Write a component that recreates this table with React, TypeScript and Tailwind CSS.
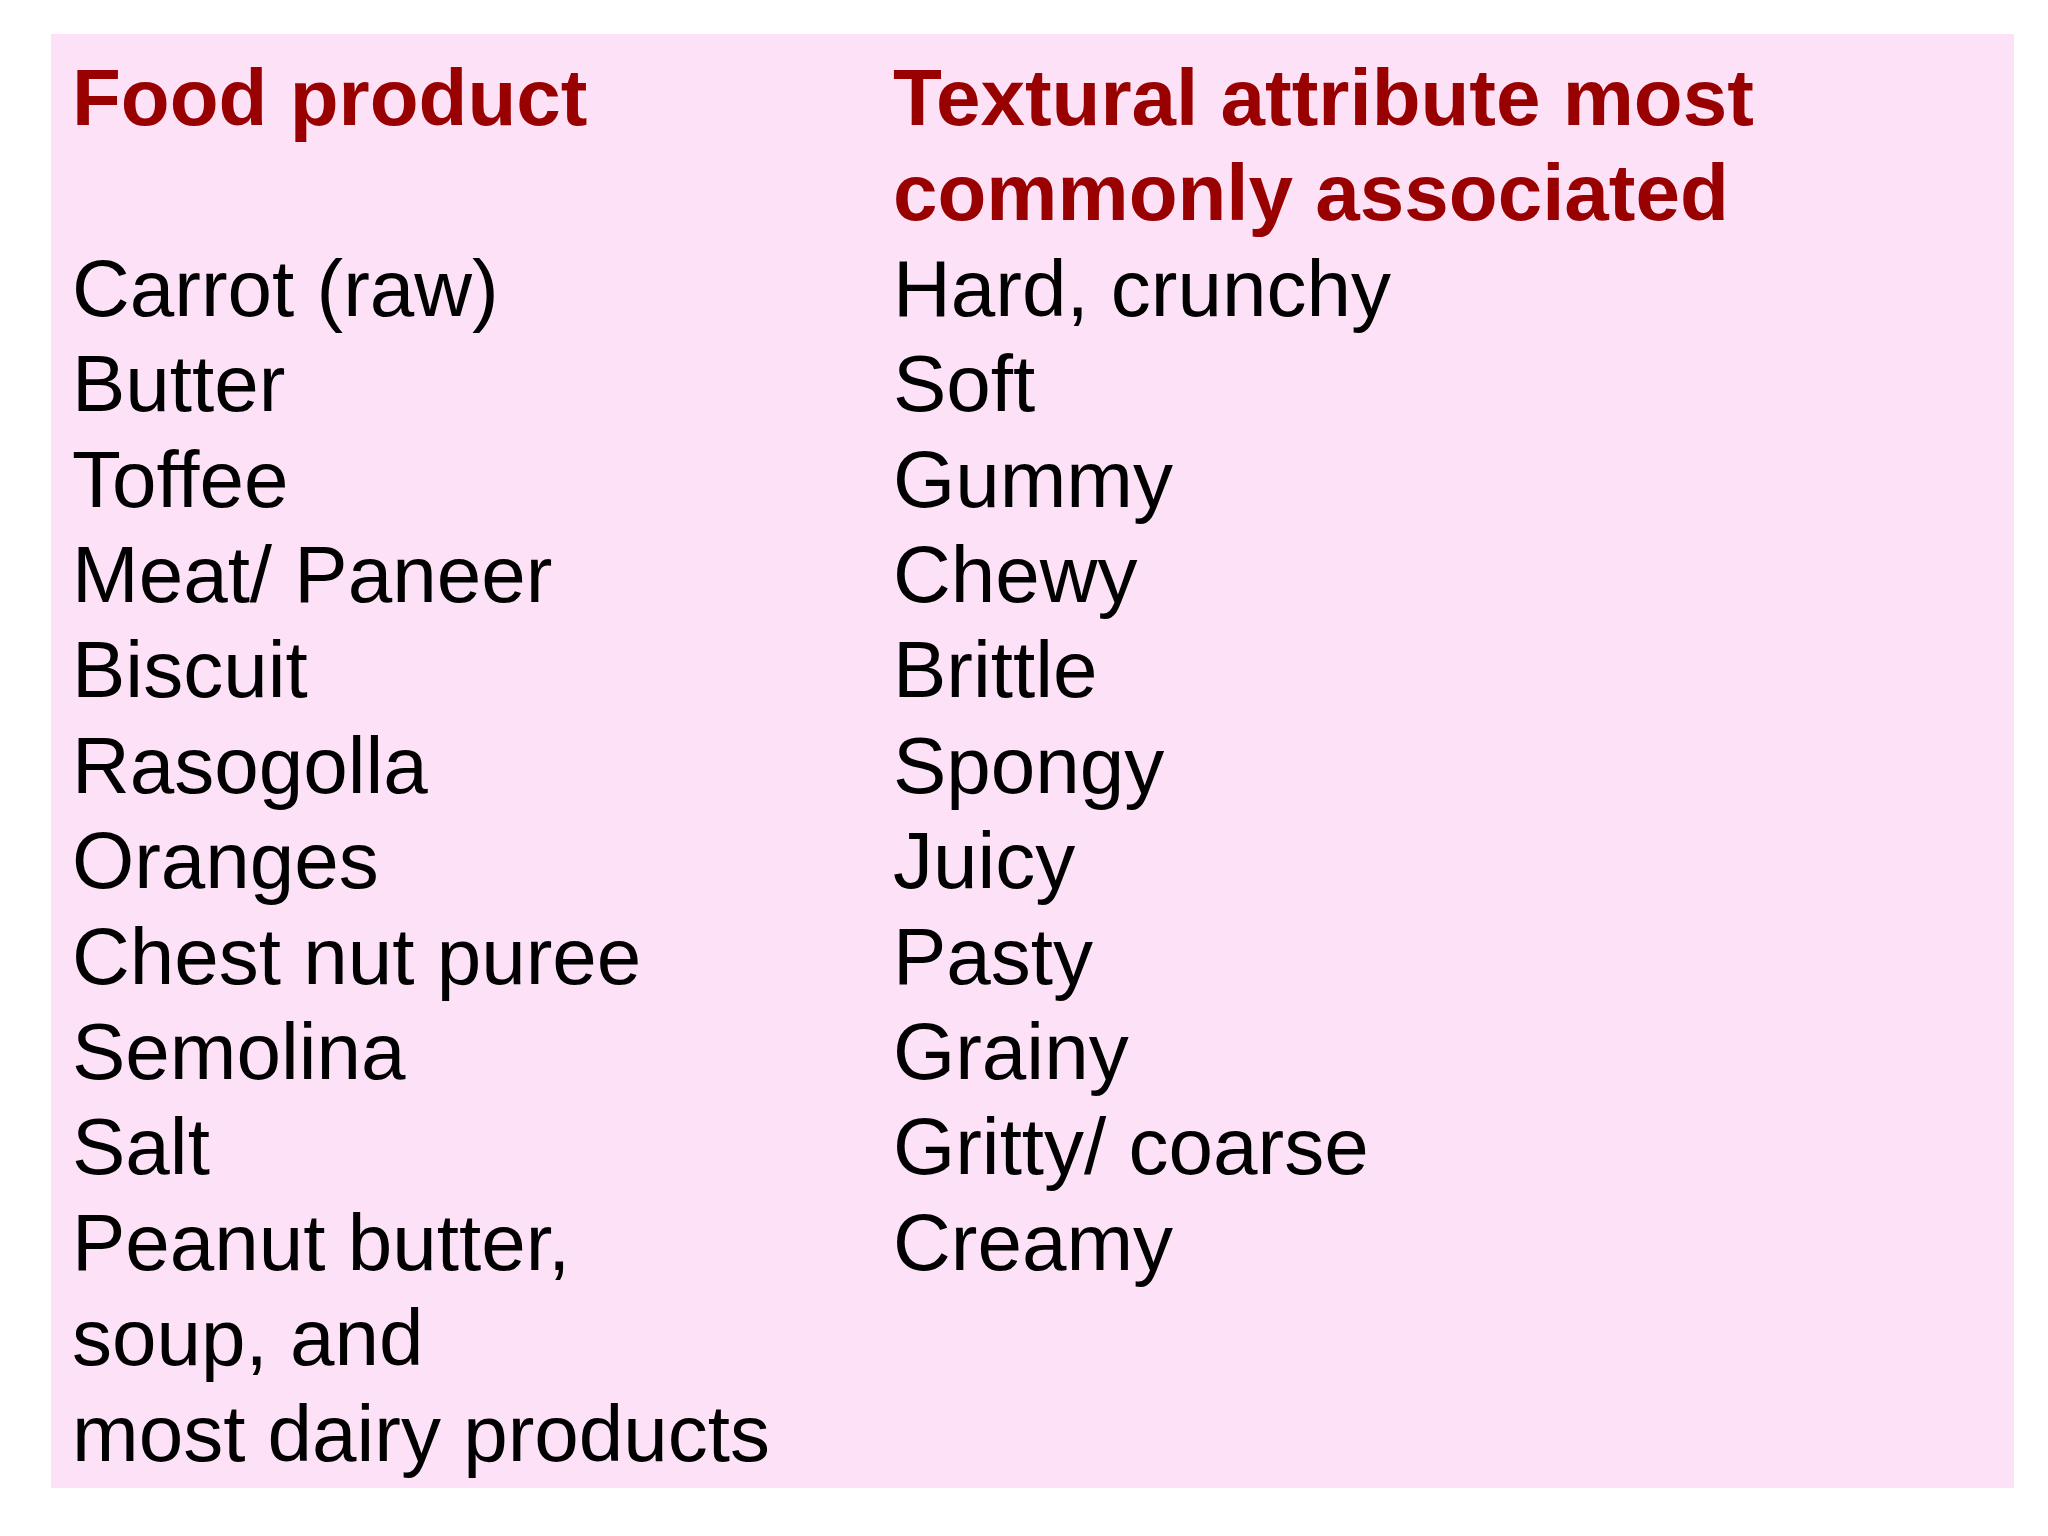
const rows: [string[], string][] = [
  [["Carrot (raw)"], "Hard, crunchy"],
  [["Butter"], "Soft"],
  [["Toffee"], "Gummy"],
  [["Meat/ Paneer"], "Chewy"],
  [["Biscuit"], "Brittle"],
  [["Rasogolla"], "Spongy"],
  [["Oranges"], "Juicy"],
  [["Chest nut puree"], "Pasty"],
  [["Semolina"], "Grainy"],
  [["Salt"], "Gritty/ coarse"],
  [["Peanut butter,", "soup, and", "most dairy products"], "Creamy"],
];

export default function App() {
  return (
    <div className="min-h-screen bg-white pl-[51px] pt-[34px] font-['Liberation_Sans',Arial,sans-serif]">
      <div className="h-[1454px] w-[1963px] bg-[#fde2f7] pl-[21px] pt-[16px] text-[80px] leading-[95.4px] text-black">
        <div className="grid grid-cols-[821px_1fr]">
          <div className="font-bold text-[#990000]">Food product</div>
          <div className="font-bold text-[#990000]">
            <div>Textural attribute most</div>
            <div>commonly associated</div>
          </div>
          {rows.map(([food, texture]) => (
            <div key={texture} className="contents">
              <div>
                {food.map((line) => (
                  <div key={line} className="whitespace-nowrap">
                    {line}
                  </div>
                ))}
              </div>
              <div className="whitespace-nowrap">{texture}</div>
            </div>
          ))}
        </div>
      </div>
    </div>
  );
}
